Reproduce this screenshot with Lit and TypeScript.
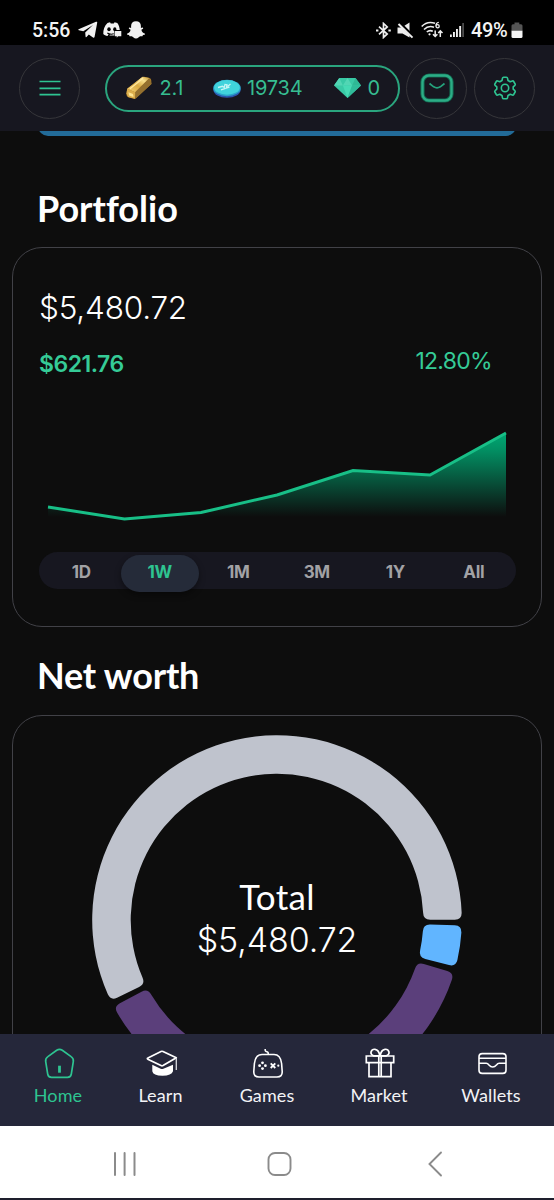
import { LitElement, html, svg, css } from "lit";
import { customElement, property, state } from "lit/decorators.js";
import { classMap } from "lit/directives/class-map.js";

const telegram = html`<svg width="20" height="18" viewBox="0 0 20 18"><path fill="#f1f1f1" d="M.6 8.3 18 .8c.8-.3 1.4.1 1.2 1L16.600 15.800c-.2.9-.9 1.200-1.600.7l-4.200-3.100-2.300 2.700c-.4.3-.8.1-.9-.4l-.4-4.200L15 4 5.300 10.200.8 9.200C.2 9 .1 8.500.600 8.300Z"/></svg>`;
const discord = html`<svg width="19" height="16" viewBox="0 0 19 16"><path fill="#f1f1f1" d="M4.500 1 7 .3l.8 1.200h3l.8-1.200 2.700.7c1.500 2 2.300 4.500 2.500 7h-5.500v5.500H6.500l.6-1.500-1.300.1L4.500 14C2.800 13.800 1.200 13 .3 12 .1 8 1.500 3.500 4.500 1Z"/><path fill="#f1f1f1" d="M11.800 9h6.500v5.300h-3.300L13.800 15.800V14.300h-2Z"/><ellipse cx="6" cy="7.300" rx="1.700" ry="2" fill="#000"/><ellipse cx="11.800" cy="7.300" rx="1.600" ry="2" fill="#000"/><path d="M4.300 11c2 1.300 4 1.600 6.500.8" stroke="#000" stroke-width="1.100" fill="none"/></svg>`;
const ghost = html`<svg width="18" height="18" viewBox="0 0 18 18"><path fill="#f1f1f1" d="M9 .3c3.100 0 4.900 2 4.900 4.700v2l1.500-.4c.9 0 1 .9.300 1.300l-1.300.8c.4 2.100 1.600 3.300 3.300 3.900.5.3.4.9-.2 1.100l-1.600.4-.4 1.200-2.200-.1c-1.300.5-2.200 2.200-4.300 2.200s-3-1.700-4.300-2.200l-2.200.1-.4-1.200-1.600-.4c-.6-.2-.7-.8-.2-1.100 1.700-.6 2.900-1.800 3.300-3.900l-1.300-.8c-.7-.4-.6-1.300.3-1.300l1.500.4V5C4.100 2.300 5.900.3 9 .3Z"/></svg>`;
const bluetooth = html`<svg width="15" height="17" viewBox="0 0 15 17" fill="none" stroke="#eee" stroke-width="1.700"><path d="M3 4.600 11.200 12 7.500 15.400V1.500L11.200 5 3 12.300"/><path d="M0 8.500h2.400M12.400 8.500h2.400" stroke-width="2"/></svg>`;
const muted = html`<svg width="17" height="17" viewBox="0 0 17 17"><path fill="#eee" d="M.5 5.500h4.200L12.500.5v15L5.500 11.500H.5Z"/><path d="M1.500 0 17 15.500" stroke="#000" stroke-width="3.200"/><path d="M1.500 2 15.500 15.600" stroke="#eee" stroke-width="2"/></svg>`;
const wifi = html`<svg width="23" height="18" viewBox="0 0 23 18" fill="none" stroke="#eee" stroke-width="1.600"><path d="M.7 5.500C4.500 1.500 9.500.8 14 2.300M3 8.500c3-3 7-3.400 10-2.200M5.800 11c1.800-1.600 4-1.700 6-.8"/><circle cx="8.500" cy="13.300" r="1.100" fill="#eee" stroke="none"/><path d="M17.800 1.300C15.500 1.500 14.900 3.300 14.900 5M15 5.200a1.600 1.600 0 1 0 3.200 0 1.600 1.600 0 0 0-3.200 0" stroke-width="1.300"/><path d="M14.200 9.500v6M12 13.200l2.200 2.300 2.200-2.300M19.300 16v-6M17.200 12l2.100-2.200 2.200 2.200" stroke-width="1.500"/></svg>`;
const signal = html`<svg width="15" height="16" viewBox="0 0 15 16" fill="#eee"><rect x="0" y="12.500" width="1.800" height="2.500"/><rect x="3" y="10" width="1.900" height="5"/><rect x="6" y="7" width="1.900" height="8"/><rect x="9.200" y="4" width="1.900" height="11"/><rect x="12.300" y="1" width="1.600" height="14" fill="#555"/></svg>`;
const battery = html`<svg width="12" height="17" viewBox="0 0 12 17"><path d="M3.500.5h4.800v1.800h1.700q1.500 0 1.500 1.500V9H.5V3.800q0-1.500 1.500-1.500h1.500Z" fill="#555"/><path d="M.5 8.800h11v5.700q0 1.500-1.500 1.500H2Q.5 16 .5 14.500Z" fill="#f4f4f4"/></svg>`;

const menuIcon = html`<svg width="22" height="16" viewBox="0 0 22 16"><path d="M.5 1.500h21M.5 8.300h21M.5 14.700h21" stroke="#2ec491" stroke-width="1.700"/></svg>`;
const goldIcon = html`<svg width="26" height="24" viewBox="0 0 26 24">
  <defs><linearGradient id="g" x1="0" y1="1" x2="1" y2="0"><stop offset="0" stop-color="#f4d277"/><stop offset=".45" stop-color="#d9aa42"/><stop offset=".75" stop-color="#f8e08e"/><stop offset="1" stop-color="#c39535"/></linearGradient></defs>
  <path d="M1.200 12.800 16 1.300Q17 .5 18.200.8L23.500 2Q25 2.400 25.200 4L25.500 8 10 22.300Q9 23.200 7.500 22.800L2.300 21.300Q.3 20.500.4 18Z" fill="#a97a28"/>
  <path d="M1.200 12.800 16.500.8 23.500 2 9.200 16.300Z" fill="url(#g)"/>
  <path d="M9.200 16.300 23.500 2l1.900 5.700L10 22.300 8.700 22.500Z" fill="#94702f"/>
  <path d="M1.200 12.800 9.200 16.300 9 22.700 2 21 .4 17.500Z" fill="#dcae4c"/>
  <path d="M2.500 16.200 7 18l.6 3-4.500-1.500Z" fill="#ffe594"/><path d="M4 12.800 17 2.300" stroke="#ffe9a0" stroke-width="1.300"/></svg>`;
const coinIcon = html`<svg width="28" height="19" viewBox="0 0 28 19">
  <ellipse cx="14" cy="10.800" rx="13.700" ry="8" fill="#2c55ad"/><ellipse cx="14" cy="9" rx="13.800" ry="8.300" fill="#2aa3cb"/><ellipse cx="14" cy="8.400" rx="12.800" ry="7.300" fill="#40d3dc"/>
  <path d="M5 8.500 9.500 7.300l1.700 1.200.8-3 2 .2-.7 3.300 3.200-.8M8 10.800l4.500-1.500M17.500 5l-3 2.500" fill="none" stroke="#c4f5f5" stroke-width="1.300"/></svg>`;
const gemIcon = html`<svg width="27" height="20" viewBox="0 0 27 20"><path d="M5.300 0h16.200L27 7.500 13.500 20 0 7.500Z" fill="#39c9a5"/><path d="m5.300 0 3.600 7.500H0ZM13.500 0l4.600 7.500H8.900Z" fill="#52d6b4"/><path d="M21.500 0 18.100 7.500H27Z" fill="#2fb895"/><path d="M8.900 7.500h9.200L13.500 20Z" fill="#46dab4"/><path d="M18.100 7.500H27L13.500 20Z" fill="#30bc9a"/></svg>`;
const inboxIcon = html`<svg width="36" height="32" viewBox="0 0 36 32" fill="none"><rect x="3.500" y="3.500" width="29" height="25" rx="6.500" stroke="#126950" stroke-width="4.200"/><rect x="3.500" y="3.500" width="29" height="25" rx="6.500" stroke="#2cad86" stroke-width="2.300"/><path d="M10.500 11.500l4.200 3.300q3.300 2 6.600 0l4.200-3.300" stroke="#25a37c" stroke-width="1.700"/></svg>`;
const gearIcon = html`<svg width="24" height="24" viewBox="0 0 24 24" fill="none" stroke="#2ec491" stroke-width="1.600" stroke-linejoin="round"><circle cx="12" cy="12" r="3.700"/><path d="M10.500 1.300h3q.8 0 1 .9l.5 2.300 2.200 1.300 2.200-.8q.8-.3 1.300.5l1.400 2.500q.4.700-.2 1.300l-1.700 1.500v2.400l1.700 1.500q.6.600.2 1.300l-1.400 2.500q-.5.800-1.300.5l-2.200-.8-2.200 1.300-.5 2.300q-.2.900-1 .9h-3q-.8 0-1-.9L9 19.500l-2.200-1.300-2.200.8q-.8.3-1.300-.5L1.900 16q-.4-.7.200-1.300l1.700-1.500v-2.400L2.100 9.300Q1.500 8.700 1.900 8l1.400-2.500q.5-.8 1.300-.5l2.200.8L9 4.500l.5-2.300q.2-.9 1-.9Z"/></svg>`;

const homeIcon = html`<svg width="32" height="32" viewBox="0 0 32 32" fill="none" stroke="#2ec491" stroke-width="1.700"><path d="M13.700 3.200q2.800-1.600 5.600 0l8.800 6.400q2.700 1.800 2.200 5l-2 12.500q-.5 3.200-3.800 3.200H8.500q-3.300 0-3.800-3.200l-2-12.500q-.5-3.200 2.200-5Z"/><path d="M16.500 18.700v7" stroke-width="2.800"/></svg>`;
const learnIcon = html`<svg width="32" height="32" viewBox="0 0 32 32"><path d="M1.800 12.200q-1-.8.1-1.300L15 4.500q1-.5 2 0L30.300 10.800 17 18.600q-1 .5-2 0Z" fill="none" stroke="#fff" stroke-width="1.700" stroke-linejoin="round"/><path d="M30.300 11v12" stroke="#d9dae0" stroke-width="1.300"/><path d="M6.300 17.700l8.300 4q1.400.6 2.800 0l9.600-4v6.500q-1.500 4.300-10.500 4.500-9.500-.2-10.200-4.500Z" fill="#fff"/></svg>`;
const gamesIcon = html`<svg width="32" height="32" viewBox="0 0 32 32" fill="none" stroke="#fff" stroke-width="1.600"><path d="M10 7.500h12q6.500 0 7.600 9l.6 8q.3 5.500-5.200 5.500H7q-5.500 0-5.200-5.500l.6-8q1.100-9 7.600-9Z"/><path d="M13.200 2q-.3 2.500 1.500 2.700T16.200 7.300"/><g fill="#fff" stroke="none"><circle cx="10.500" cy="15.800" r="1.400"/><circle cx="10.500" cy="21.600" r="1.400"/><circle cx="7.600" cy="18.700" r="1.400"/><circle cx="13.400" cy="18.700" r="1.400"/></g><path d="m18.700 16.400 4.600 4.600m0-4.600-4.600 4.600" stroke-width="1.800"/><circle cx="26.300" cy="18.700" r="1.100" fill="#fff" stroke="none"/></svg>`;
const giftIcon = html`<svg width="32" height="32" viewBox="0 0 32 32" fill="none" stroke="#fff" stroke-width="1.700"><path d="M2.300 9h27.400v6.700H2.300ZM5 15.700h22v14H5ZM14.800 9v20.700M17.200 9v20.700"/><path d="M15.500 8.800H9.500Q6.500 7.500 7 5q1-3 4-2.700 4 .5 4.800 6.500M16.500 8.800h6q3-1.300 2.500-3.800-1-3-4-2.700-4 .5-4.800 6.500"/></svg>`;
const walletIcon = html`<svg width="32" height="32" viewBox="0 0 32 32" fill="none" stroke="#fff" stroke-width="1.600"><rect x="3" y="6.600" width="27" height="19.800" rx="3.200"/><path d="M3 11.300h27M3 16.300h7.200q1.500 0 2.500 1.500 4 4.500 8 0 1-1.500 2.500-1.500h6.800"/></svg>`;

const CX = 200;
const CY = 200;
const OUTER = 184.8;
const INNER = 146.3;

const polar = (radius: number, degrees: number) => {
  const a = (degrees * Math.PI) / 180;
  return `${(CX + radius * Math.cos(a)).toFixed(2)} ${(CY + radius * Math.sin(a)).toFixed(2)}`;
};

/** Ring segment between two clockwise angles, with softened corners. */
const segment = (from: number, to: number, corner = 7) => {
  const o = (corner / OUTER) * 57.3;
  const i = (corner / INNER) * 57.3;
  const big = to - from > 180 ? 1 : 0;
  return `M${polar(OUTER, from + o)}A${OUTER} ${OUTER} 0 ${big} 1 ${polar(OUTER, to - o)}Q${polar(OUTER, to)} ${polar(OUTER - corner, to)}L${polar(INNER + corner, to)}Q${polar(INNER, to)} ${polar(INNER, to - i)}A${INNER} ${INNER} 0 ${big} 0 ${polar(INNER, from + i)}Q${polar(INNER, from)} ${polar(INNER + corner, from)}L${polar(OUTER - corner, from)}Q${polar(OUTER, from)} ${polar(OUTER, from + o)}Z`;
};

@customElement("status-bar")
class StatusBar extends LitElement {
  static styles = css`
    :host { display: flex; justify-content: space-between; height: 45px; padding: 15px 31px 0 32px; box-sizing: border-box; background: #000; color: #f4f4f4; font-family: Roboto, sans-serif; }
    .group { display: flex; align-items: center; height: 30px; }
    .time { width: 46px; font-size: 19.5px; font-weight: 500; }
    .icon { display: flex; }
    .left .icon { width: 24.500px; }
    .right { gap: 6.500px; }
    .level { font-size: 20px; font-weight: 500; letter-spacing: -0.3px; margin: 0 -3px 0 -1px; }
  `;
  render() {
    return html`<div class="group left"><span class="time">5:56</span>${[telegram, discord, ghost].map((i) => html`<span class="icon">${i}</span>`)}</div>
      <div class="group right">${[bluetooth, muted, wifi, signal].map((i) => html`<span class="icon">${i}</span>`)}<span class="level">49%</span><span class="icon">${battery}</span></div>`;
  }
}

@customElement("top-bar")
class TopBar extends LitElement {
  static styles = css`
    :host { display: flex; align-items: center; height: 86px; padding: 0 18px 0 19px; box-sizing: border-box; background: #171720; font-family: Inter, sans-serif; }
    .round { display: flex; align-items: center; justify-content: center; width: 61px; height: 61px; box-sizing: border-box; border: 1px solid #36363a; border-radius: 50%; flex: none; }
    .pill { display: grid; grid-template-columns: 87px 120.500px auto; align-items: center; width: 295px; height: 47px; margin: 0 6px 0 25px; padding-left: 19px; box-sizing: border-box; border: 2px solid #2aa57e; border-radius: 24px; flex: none; }
    .stat { display: flex; align-items: center; color: #36bd91; font-size: 20px; line-height: 24px; letter-spacing: -0.3px; }
    .stat svg { flex: none; }
    .stat span { margin-left: 7.500px; }
    .coins span { margin-left: 6px; letter-spacing: -0.2px; }
    .gems span { margin-left: 7px; }
    .last { margin-left: 7px; }
  `;
  render() {
    return html`<div class="round">${menuIcon}</div>
      <div class="pill">
        <div class="stat">${goldIcon}<span>2.1</span></div>
        <div class="stat coins">${coinIcon}<span>19734</span></div>
        <div class="stat gems">${gemIcon}<span>0</span></div>
      </div>
      <div class="round">${inboxIcon}</div>
      <div class="round last">${gearIcon}</div>`;
  }
}

@customElement("range-tabs")
class RangeTabs extends LitElement {
  static styles = css`
    :host { display: grid; grid-template-columns: repeat(6, 1fr); height: 37px; padding: 0 3px; box-sizing: border-box; background: #171720; border-radius: 19px; }
    .tab { display: flex; align-items: center; justify-content: center; height: 37.500px; padding: 0; margin: 2.500px 0 0; border: 0; border-radius: 19px; background: none; color: #a2a2a5; font: 700 17px/34px Inter, sans-serif; letter-spacing: -0.3px; }
    .label { height: 36px; }
    .active { background: #252b39; color: #2ec491; box-shadow: 0 3px 6px #0006; }
  `;
  @state() private selected = "1W";
  render() {
    return ["1D", "1W", "1M", "3M", "1Y", "All"].map(
      (t) => html`<button class=${classMap({ tab: true, active: t === this.selected })} @click=${() => (this.selected = t)}><span class="label">${t}</span></button>`
    );
  }
}

@customElement("value-chart")
class ValueChart extends LitElement {
  static styles = css`:host { display: block; height: 96px; } svg { display: block; }`;
  @property({ attribute: false }) points: number[][] = [];
  render() {
    const line = this.points.map((p) => p.join(",")).join(" ");
    return html`<svg width="477" height="96" viewBox="0 0 477 96">
      <defs><linearGradient id="fade" gradientUnits="userSpaceOnUse" x1="0" y1="8" x2="0" y2="92"><stop offset="0" stop-color="#00a873"/><stop offset=".2" stop-color="#00a873" stop-opacity=".84"/><stop offset="1" stop-color="#00a873" stop-opacity="0"/></linearGradient></defs>
      <polygon points="10,92 ${line} 468,92" fill="url(#fade)"/>
      <polyline points=${line} fill="none" stroke="#18bf87" stroke-width="3"/></svg>`;
  }
}

@customElement("worth-ring")
class WorthRing extends LitElement {
  static styles = css`
    :host { display: grid; justify-items: center; align-items: center; width: 400px; height: 400px; color: #fff; }
    svg, .total { grid-area: 1 / 1; }
    .total { display: flex; flex-direction: column; align-items: center; line-height: 43px; padding-bottom: 4px; }
    .caption { font-family: Lato, sans-serif; font-size: 35px; letter-spacing: 0.3px; }
    .amount { font-family: Inter, sans-serif; font-size: 34px; font-weight: 350; letter-spacing: -0.1px; }
  `;
  render() {
    const parts = [
      { from: 154.100, to: 359.900, color: "#bfc3cd" },
      { from: 1.700, to: 14.700, color: "#61b5ff" },
      { from: 16.700, to: 152.100, color: "#5b3f7b" },
    ];
    return html`<svg width="400" height="400" viewBox="0 0 400 400">${parts.map((p) => svg`<path d=${segment(p.from, p.to)} fill=${p.color}></path>`)}</svg>
      <div class="total"><span class="caption">Total</span><span class="amount">$5,480.72</span></div>`;
  }
}

@customElement("bottom-nav")
class BottomNav extends LitElement {
  static styles = css`
    :host { display: grid; grid-template-columns: 104px 101px 112px 112px 112px; height: 92px; padding: 13px 0 0 6px; box-sizing: border-box; background: #25273a; color: #f3f3f6; font-family: Lato, sans-serif; font-size: 18px; letter-spacing: 0.1px; }
    .item { display: flex; flex-direction: column; align-items: center; gap: 5px; line-height: 22px; }
    .item svg { display: block; margin-left: 2px; }
    .active { color: #2ec491; }
  `;
  render() {
    const items = [["Home", homeIcon], ["Learn", learnIcon], ["Games", gamesIcon], ["Market", giftIcon], ["Wallets", walletIcon]];
    return items.map(([name, icon], i) => html`<div class=${classMap({ item: true, active: i === 0 })}>${icon}<span>${name}</span></div>`);
  }
}

@customElement("system-keys")
class SystemKeys extends LitElement {
  static styles = css`
    :host { display: grid; grid-template-columns: 25px 25px 25px; column-gap: 130px; align-items: center; height: 74px; padding: 4px 0 0 112px; box-sizing: border-box; background: #fff; border-bottom: 2px solid #1e1f2d; }
    svg { display: block; }
  `;
  render() {
    return html`<svg width="25" height="26" viewBox="0 0 25 26"><path d="M3 2v22M12.600 2v22M22.500 2v22" stroke="#8b8b8b" stroke-width="2" stroke-linecap="round"/></svg>
      <svg width="25" height="26" viewBox="0 0 25 26"><rect x="1.500" y="2" width="22" height="22" rx="6.500" fill="none" stroke="#8b8b8b" stroke-width="1.900"/></svg>
      <svg width="25" height="26" viewBox="0 0 25 26"><path d="M19 1.500 7.500 13 19 24.500" fill="none" stroke="#8b8b8b" stroke-width="1.900" stroke-linecap="round"/></svg>`;
  }
}

@customElement("app-root")
class AppRoot extends LitElement {
  static styles = css`
    :host { display: flex; flex-direction: column; width: 554px; height: 1200px; overflow: hidden; background: #0d0d0d; color: #fff; }
    .content { flex: 1; min-height: 0; overflow: hidden; }
    .banner { height: 20px; margin: -15px 38px 0; border-radius: 12px; background: #226b98; }
    .title { margin: 0 0 0 37px; font: 700 36px/44px Lato, sans-serif; font-variant-ligatures: none; }
    .portfolio { padding-top: 50px; }
    .worth { padding-top: 26px; letter-spacing: -0.2px; }
    .card { margin: 0 12px; border: 1px solid #414147; border-radius: 30px; box-sizing: border-box; width: 530px; }
    .summary { height: 380px; margin-top: 17px; padding: 39px 25px 0 26px; }
    .balance { font: 350 31.500px/42px Inter, sans-serif; letter-spacing: -0.2px; }
    .change { display: flex; justify-content: space-between; padding: 17px 24px 0 0; font: 400 23px/32px Inter, sans-serif; color: #35cb97; }
    .gain { font-weight: 600; margin-top: 2px; height: 32px; letter-spacing: -0.5px; }
    .rate { margin-top: -1px; letter-spacing: -0.7px; }
    .chart { margin: 45px 0 0 -1px; }
    .tabs { margin: 31px 0 0; width: 477px; }
    .ring { height: 500px; margin-top: 18px; padding: 4px 0 0 64px; }
  `;
  render() {
    const points = [[10, 82], [86.500, 94], [163, 87.500], [239, 70], [315, 45.500], [392, 50], [468, 8]];
    return html`<status-bar></status-bar>
      <top-bar></top-bar>
      <main class="content">
        <div class="banner"></div>
        <h2 class="title portfolio">Portfolio</h2>
        <section class="card summary">
          <div class="balance">$5,480.72</div>
          <div class="change"><span class="gain">$621.76</span><span class="rate">12.80%</span></div>
          <value-chart class="chart" .points=${points}></value-chart>
          <range-tabs class="tabs"></range-tabs>
        </section>
        <h2 class="title worth">Net worth</h2>
        <section class="card ring"><worth-ring></worth-ring></section>
      </main>
      <bottom-nav></bottom-nav>
      <system-keys></system-keys>`;
  }
}
